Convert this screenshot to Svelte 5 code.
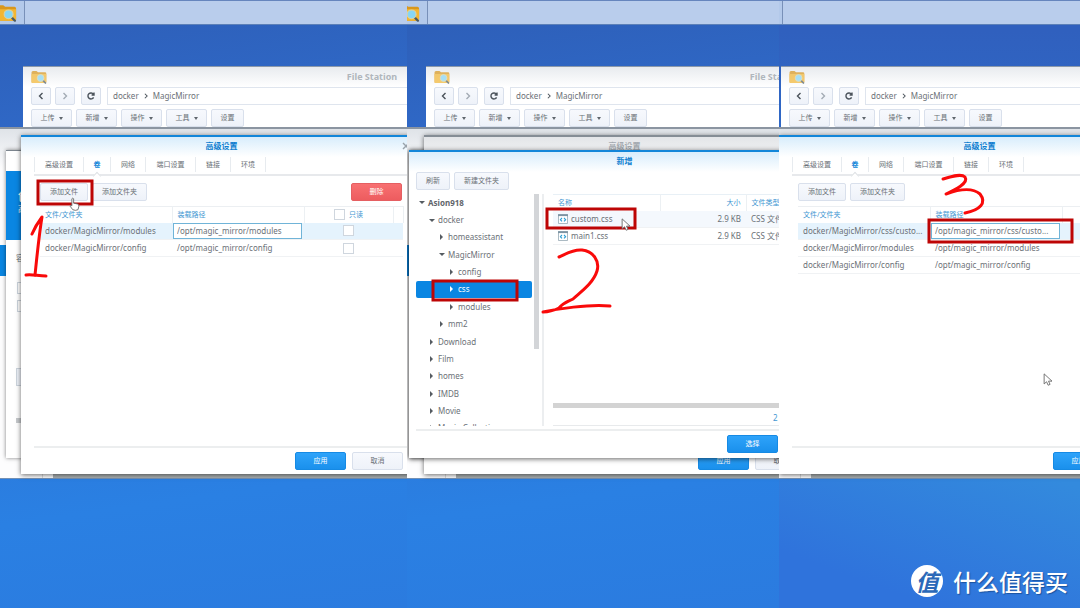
<script lang="ts">
	type Mount = { file: string; path: string; editing?: boolean };
	type Pane = { step: number; shift: number; picking: boolean; mounts: Mount[] };

	const panes: Pane[] = [
		{
			step: 1,
			shift: 0,
			picking: false,
			mounts: [
				{ file: 'docker/MagicMirror/modules', path: '/opt/magic_mirror/modules', editing: true },
				{ file: 'docker/MagicMirror/config', path: '/opt/magic_mirror/config' }
			]
		},
		{ step: 2, shift: -4, picking: true, mounts: [] },
		{
			step: 3,
			shift: -21,
			picking: false,
			mounts: [
				{
					file: 'docker/MagicMirror/css/custo...',
					path: '/opt/magic_mirror/css/custo...',
					editing: true
				},
				{ file: 'docker/MagicMirror/modules', path: '/opt/magic_mirror/modules' },
				{ file: 'docker/MagicMirror/config', path: '/opt/magic_mirror/config' }
			]
		}
	];

	const menus = ['上传', '新增', '操作', '工具'];
	const tabs = ['高级设置', '卷', '网络', '端口设置', '链接', '环境'];

	const tree = [
		{ name: 'Asion918', level: 0, open: true },
		{ name: 'docker', level: 1, open: true },
		{ name: 'homeassistant', level: 2, open: false },
		{ name: 'MagicMirror', level: 2, open: true },
		{ name: 'config', level: 3, open: false },
		{ name: 'css', level: 3, open: false },
		{ name: 'modules', level: 3, open: false },
		{ name: 'mm2', level: 2, open: false },
		{ name: 'Download', level: 1, open: false },
		{ name: 'Film', level: 1, open: false },
		{ name: 'homes', level: 1, open: false },
		{ name: 'IMDB', level: 1, open: false },
		{ name: 'Movie', level: 1, open: false },
		{ name: 'Movie Collection', level: 1, open: false }
	];

	const files = ['custom.css', 'main1.css'];
	let selected = $state('css');
</script>

{#snippet folder(cls: string)}
	<svg class={cls} viewBox="0 0 16 14" preserveAspectRatio="none" aria-hidden="true">
		<path d="M0.5 2.5 Q0.5 1 2 1 H5.5 L7 2.2 H14 Q15.3 2.2 15.3 3.5 V12 Q15.3 13 14.3 13 H1.5 Q0.5 13 0.5 12 Z" fill="#d9971c" />
		<path d="M0.5 4 H15.3 V12 Q15.3 13 14.3 13 H1.5 Q0.5 13 0.5 12 Z" fill="#f3b632" />
		<path d="M11.9 10.4 L14.4 13" stroke="#4b5b63" stroke-width="1.7" stroke-linecap="round" />
		<circle cx="9.6" cy="8" r="3.4" fill="#86d6f5" stroke="#d9d3a8" stroke-width="0.8" />
	</svg>
{/snippet}

{#snippet arrow(cls: string)}
	<svg class="cursor {cls}" viewBox="0 0 12 16" aria-hidden="true">
		<path d="M1 1 V12.5 L3.8 10 L5.6 14 L7.8 13 L6 9.3 H10 Z" fill="#fff" stroke="#666" />
	</svg>
{/snippet}

{#snippet fileStation()}
	<section class="window station">
		<header>
			{@render folder('folder')}
			<h2>File Station</h2>
		</header>
		<div class="nav">
			<button class="btn" type="button" aria-label="后退">
				<svg viewBox="0 0 8 8"><path d="M5.5 1 L2.5 4 L5.5 7" /></svg>
			</button>
			<button class="btn dim" type="button" aria-label="前进">
				<svg viewBox="0 0 8 8"><path d="M2.5 1 L5.5 4 L2.5 7" /></svg>
			</button>
			<button class="btn reload" type="button" aria-label="刷新">
				<svg viewBox="0 0 8 8"><path d="M6.6 5.4 A3 3 0 1 1 6.4 2.2 M7 0.6 V3 H4.6" /></svg>
			</button>
			<div class="crumbs">
				<span>docker</span>
				<svg viewBox="0 0 8 8"><path d="M2.5 1 L5.5 4 L2.5 7" /></svg>
				<span>MagicMirror</span>
			</div>
		</div>
		<div class="menus">
			{#each menus as m (m)}
				<button class="btn menu" type="button">{m}<i class="caret"></i></button>
			{/each}
			<button class="btn menu short" type="button">设置</button>
		</div>
	</section>
{/snippet}

{#snippet settings(pane: Pane)}
	<section class="window dialog settings" class:inactive={pane.picking}>
		<header>
			<h2>高级设置</h2>
			<button class="close" type="button" aria-label="关闭">
				<svg viewBox="0 0 8 8"><path d="M1 1 L7 7 M7 1 L1 7" /></svg>
			</button>
		</header>
		<nav>
			{#each tabs as tab (tab)}
				<button class="tab" class:wide={tab.length > 2} class:active={tab === '卷'} type="button">{tab}</button>
			{/each}
		</nav>
		<div class="tools">
			<button class="btn" type="button">添加文件</button>
			<button class="btn" type="button">添加文件夹</button>
			<button class="btn danger" type="button">删除</button>
		</div>
		<table class="mounts">
			<thead>
				<tr>
					<th>文件/文件夹</th>
					<th>装载路径</th>
					<th class="ro">
						<label><input type="checkbox" />只读</label>
					</th>
					<th class="end"></th>
				</tr>
			</thead>
			<tbody>
				{#each pane.mounts as mount (mount.file)}
					<tr class:current={mount.editing}>
						<td>{mount.file}</td>
						{#if mount.editing}
							<td class="edit"><input type="text" aria-label="装载路径" value={mount.path} /></td>
						{:else}
							<td>{mount.path}</td>
						{/if}
						<td class="ro"><input type="checkbox" aria-label="只读" /></td>
						<td></td>
					</tr>
				{/each}
			</tbody>
		</table>
		<footer>
			<button class="btn primary" type="button">应用</button>
			<button class="btn" type="button">取消</button>
		</footer>
	</section>
{/snippet}

{#snippet picker()}
	<section class="window dialog picker">
		<header><h2>新增</h2></header>
		<div class="tools">
			<button class="btn" type="button">刷新</button>
			<button class="btn" type="button">新建文件夹</button>
		</div>
		<div class="browse">
			<div class="side">
				<ul>
					{#each tree as node (node.name)}
						<li>
							<button
								class="node l{node.level}"
								class:open={node.open}
								class:selected={selected === node.name}
								onclick={() => (selected = node.name)}
								type="button"><i></i>{node.name}</button
							>
						</li>
					{/each}
				</ul>
				<div class="bar"></div>
			</div>
			<div class="list">
				<table>
					<thead>
						<tr><th class="name">名称</th><th class="size">大小</th><th>文件类型</th></tr>
					</thead>
					<tbody>
						{#each files as f, i (f)}
							<tr class:hover={i === 0}>
								<td>
									<svg class="code" viewBox="0 0 11 11" aria-hidden="true">
										<path d="M0.5 0.5 H10.5 V10.5 H0.5 Z" fill="#fff" stroke="#9fb0bb" />
										<path d="M0 1.3 H11" stroke="#7d94a3" stroke-width="2" />
										<path d="M4.4 4.4 L2.6 6.3 L4.4 8.2 M6.6 4.4 L8.4 6.3 L6.6 8.2" fill="none" stroke="#2e9fd4" stroke-width="1.2" />
									</svg>{f}
								</td>
								<td class="size">2.9 KB</td>
								<td>CSS 文件</td>
							</tr>
						{/each}
					</tbody>
				</table>
				<div class="hbar"></div>
				<p class="count">2</p>
			</div>
		</div>
		<footer><button class="btn primary" type="button">选择</button></footer>
	</section>
{/snippet}

<main>
	{#each panes as pane (pane.step)}
		<div class="pane step{pane.step}">
			<div class="desktop" style:left="{pane.shift}px">
				<div class="taskbar">
					<button class="app" type="button" aria-label="File Station">{@render folder('task')}</button>
				</div>
				{@render fileStation()}
				<section class="window docker">
					<div class="status"></div>
				</section>
				<div class="strip"></div>
				<section class="window wizard">
					<div class="banner"><b>创建</b><span>高级</span></div>
					<p>容器</p>
					<i class="field"></i><i class="field"></i><i class="next"></i><i class="scroll"></i>
				</section>
				{@render settings(pane)}
				{#if pane.picking}
					{@render picker()}
				{/if}

				<svg class="marks" aria-hidden="true">
					{#if pane.step === 1}
						<rect x="38" y="181" width="54" height="23" />
						<path d="M32 234 C35 227 39 221 42 217 C39 235 37 256 35 275" />
						<path d="M26 275 C32 274 38 276 46 276" />
					{:else if pane.step === 2}
						<rect x="30" y="281" width="84" height="19" />
						<rect x="144" y="209" width="88" height="19" />
						<path d="M156 257 C163 254 170 249 179 250 C190 251 197 261 194 271 C190 284 176 293 170 299 C164 302 160 303 156 308 C150 311 145 312 140 312 C154 309 185 304 207 306" />
					{:else}
						<rect x="171" y="220" width="143" height="22" />
						<path d="M185 179 C192 177 203 173 207 177 C211 183 197 190 188 194 C199 190 214 187 222 194 C229 203 222 210 207 213" />
					{/if}
				</svg>
				{#if pane.step === 1}
					<svg class="cursor hand" viewBox="0 0 12 16" aria-hidden="true">
						<path d="M3 10 V2 Q4 0.6 5 2 V7 L9.5 8 Q11.3 8.5 11 10.5 L10 14.5 Q7 16 4 14.5 L1 10.5 Q0.8 9 3 10 Z" fill="#fff" stroke="#666" />
					</svg>
				{:else}
					{@render arrow(pane.step === 2 ? 'on-file' : 'idle')}
				{/if}
			</div>
		</div>
	{/each}
	<div class="brand"><b>值</b><span>什么值得买</span></div>
</main>

<style>
	:global(body) {
		background: #2c7de0;
	}

	main {
		color: #6b7177;
		display: grid;
		font: 8px/12px 'Noto Sans', 'Noto Sans CJK SC', sans-serif;
		grid-template-columns: 407fr 372fr 301fr;
		min-height: 100vh;
		position: relative;
	}

	.pane {
		background: linear-gradient(172deg, #2e60ba 5%, #2f68c6 20%, #2a80e3 79%, #2b7bdf);
		overflow: hidden;
		position: relative;
	}

	.step3 {
		background: linear-gradient(#3060be 5%, #2f68c6 21%, transparent 40%),
			linear-gradient(20deg, #2f73dc 8%, #338add 32%);
	}

	.desktop {
		height: 100%;
		position: absolute;
		top: 0;
		width: 758px;
	}

	h2,
	p,
	ul {
		margin: 0;
		padding: 0;
	}

	button,
	input,
	header,
	th,
	td {
		box-sizing: border-box;
	}

	button,
	input {
		color: inherit;
		font: inherit;
		margin: 0;
	}

	.taskbar {
		background: #b9cdec;
		border-bottom: 1px solid #5c80b8;
		border-top: 1px solid #6685bd;
		height: 23px;
	}

	.app {
		background: #b3c9ea;
		border: 0;
		border-right: 1px solid #7890b8;
		display: block;
		height: 23px;
		padding: 0;
		width: 25px;
	}

	.task {
		display: block;
		height: 18px;
		margin-left: -4px;
		width: 21px;
	}

	.window {
		background: #fff;
		box-sizing: border-box;
		position: absolute;
	}

	.window h2 {
		font-size: 8px;
		font-weight: 700;
		text-align: center;
	}

	.btn {
		align-items: center;
		background: linear-gradient(#f7f9fd, #eef2f9);
		border: 1px solid #d9e0ec;
		border-radius: 2px;
		display: flex;
		font-size: 7px;
		height: 18px;
		justify-content: center;
		line-height: 10px;
		padding: 0;
		white-space: nowrap;
	}

	.btn svg,
	.crumbs svg,
	.close svg {
		fill: none;
		height: 8px;
		stroke: #4b535b;
		stroke-width: 1.4;
		width: 8px;
	}

	.primary {
		background: linear-gradient(#2ea3fa, #1a90ec);
		border-color: #168ae4;
		color: #fff;
	}

	.danger {
		background: linear-gradient(#f87071, #ed5c5f);
		border-color: #e55f62;
		color: #fff;
	}

	/* File Station */
	.station {
		border-top: 1px solid #8b99ab;
		height: 80px;
		left: 23px;
		top: 66px;
		width: 698px;
	}

	.station header {
		align-items: center;
		background: linear-gradient(#e8ebef, #fff);
		display: flex;
		height: 20px;
		padding-left: 8px;
	}

	.station h2 {
		color: #b0b6bc;
		flex: 1;
		font-size: 9px;
		padding-right: 24px;
	}

	.folder {
		height: 14px;
		opacity: 0.7;
		width: 16px;
	}

	.nav {
		display: flex;
		gap: 4px;
		padding-left: 8px;
	}

	.nav .btn {
		width: 20px;
	}

	.nav .reload {
		margin-left: 2px;
	}

	.nav .dim svg {
		stroke: #a3abb4;
	}

	.crumbs {
		align-items: center;
		border: 1px solid #dfe5ee;
		display: flex;
		flex: 1;
		gap: 4px;
		height: 16px;
		margin-left: 2px;
		padding-left: 5px;
	}

	.crumbs svg {
		height: 6px;
		width: 6px;
	}

	.menus {
		display: flex;
		gap: 4px;
		padding: 4px 8px;
	}

	.menu {
		gap: 4px;
		width: 41px;
	}

	.short {
		width: 33px;
	}

	.caret {
		border: 2px solid transparent;
		border-bottom: 0;
		border-top: 3px solid #5f666d;
	}

	/* Docker windows behind the dialog */
	.docker {
		background: linear-gradient(#dfe3e8, #fdfdfe 40px);
		border-bottom: 1px solid #7390b4;
		border-top: 2px solid #8b95a1;
		display: flex;
		flex-direction: column;
		height: 352px;
		justify-content: flex-end;
		left: -20px;
		top: 127px;
		width: 800px;
	}

	.status {
		background: #abb1b3;
		box-shadow: -10px 0 #fff, -11px 0 #ddd;
		height: 7px;
		margin-left: 73px;
	}

	.strip {
		background: #0a86e2;
		height: 31px;
		left: 0;
		position: absolute;
		top: 245px;
		width: 8px;
	}

	.wizard {
		border-top: 1px solid #7c858e;
		box-shadow: 0 0 4px rgb(0 0 0 / 50%);
		height: 308px;
		left: 6px;
		padding-top: 20px;
		top: 150px;
		width: 431px;
	}

	.banner {
		background: #0a86e2;
		box-sizing: border-box;
		color: #fff;
		display: flex;
		flex-direction: column;
		font-size: 8px;
		height: 69px;
		padding: 20px 12px;
	}

	.banner b {
		font-size: 12px;
	}

	.wizard p {
		margin: 12px 10px;
	}

	.field,
	.next,
	.scroll {
		border: 1px solid #ccd4dd;
		display: block;
		height: 10px;
		margin: 6px 11px;
		width: 60px;
	}

	.wizard p + .field {
		margin-top: 18px;
	}

	.next {
		background: #edf1f8;
		height: 16px;
		margin: 56px 10px 32px;
	}

	.scroll {
		background: #c6c9cc;
		border: 0;
		height: 5px;
		margin: 0 10px;
	}

	/* Dialogs */
	.dialog {
		border-top: 2px solid #1286d9;
		box-shadow: 0 1px 5px rgb(0 0 0 / 60%);
		display: flex;
		flex-direction: column;
	}

	.dialog header {
		background: linear-gradient(#d8edfc, #fff);
		color: #0f7fd0;
		height: 20px;
		padding-top: 3px;
		position: relative;
	}

	.dialog footer {
		border-top: 2px solid #eceeef;
		display: flex;
		margin-top: auto;
	}

	.settings {
		height: 339px;
		left: 21px;
		top: 135px;
		width: 401px;
	}

	.inactive {
		border-color: #858d95;
	}

	.inactive header {
		background: linear-gradient(#e3e5e8, #f4f5f6);
		color: #a5abb1;
	}

	.close {
		background: none;
		border: 0;
		display: flex;
		padding: 0;
		position: absolute;
		right: 12px;
		top: 5px;
	}

	.close svg {
		stroke: #99a2aa;
	}

	nav {
		border-bottom: 2px solid #e7e9ec;
		display: flex;
		height: 17px;
		margin: 0 0 6px 13px;
	}

	.tab {
		background: none;
		border: 0;
		border-right: 1px solid #e7ebef;
		font-size: 7px;
		height: 15px;
		line-height: 10px;
		padding: 0;
		position: relative;
		width: 35px;
	}

	.tab:first-child {
		border-left: 1px solid #e7ebef;
	}

	.tab.wide {
		width: 50px;
	}

	.tab.active {
		color: #1286d9;
		font-weight: 700;
		width: 27px;
	}

	.tab.active::after {
		background: #fff;
		border: 1px solid #dfe2e5;
		border-bottom: 0;
		border-right: 0;
		content: '';
		height: 5px;
		left: 10px;
		position: absolute;
		top: 16px;
		transform: rotate(45deg);
		width: 5px;
	}

	.tools {
		display: flex;
		gap: 4px;
	}

	.settings .tools {
		padding: 1px 20px 5px 19px;
	}

	.tools .btn {
		padding: 0 9px;
	}

	.tools .danger {
		justify-content: center;
		margin-left: auto;
		width: 51px;
	}

	table {
		border-collapse: collapse;
		table-layout: fixed;
	}

	th,
	td {
		height: 17px;
		overflow: hidden;
		padding: 0 0 0 5px;
		text-align: left;
		white-space: nowrap;
	}

	th {
		border-right: 1px solid #ecf0f3;
		color: #3f97d2;
		font-size: 7px;
		font-weight: 400;
		height: 16px;
		line-height: 10px;
	}

	tbody tr {
		border-bottom: 1px solid #f0f2f4;
	}

	.mounts {
		border-top: 1px solid #eceff2;
		margin-left: 19px;
		width: 363px;
	}

	.mounts th {
		width: 132px;
	}

	.mounts .ro {
		padding: 0;
		text-align: center;
		width: 89px;
	}

	.mounts .end {
		padding: 0;
		width: 10px;
	}

	.ro label {
		align-items: center;
		display: flex;
		gap: 4px;
		justify-content: center;
	}

	input[type='checkbox'] {
		appearance: none;
		background: #fff;
		border: 1px solid #cfd6de;
		display: block;
		height: 11px;
		margin: 0 auto;
		width: 11px;
	}

	.ro label input {
		margin: 0;
	}

	.current {
		background: #e5f3fd;
	}

	.mounts .edit {
		padding: 0 2px 0 1px;
	}

	.edit input {
		background: #fff;
		border: 1px solid #70b4d8;
		display: block;
		height: 16px;
		padding: 0 3px;
		width: 129px;
	}

	.settings footer {
		gap: 6px;
		justify-content: flex-end;
		margin-left: 13px;
		padding: 4px 19px 4px 0;
	}

	footer .btn {
		width: 51px;
	}

	/* File picker */
	.picker {
		height: 308px;
		left: 6px;
		top: 150px;
		width: 431px;
	}

	.picker .tools {
		padding: 0 7px 4px;
	}

	.picker header {
		height: 22px;
	}

	.browse {
		display: flex;
		height: 232px;
	}

	.side {
		border-right: 2px solid #eceef0;
		display: flex;
		gap: 2px;
		overflow: hidden;
		padding: 0 3px 0 7px;
	}

	.side ul {
		display: grid;
		grid-auto-rows: 1fr;
		height: 243px;
		list-style: none;
		width: 116px;
	}

	.side .bar {
		background: #d3d5d8;
		height: 155px;
		width: 5px;
	}

	li {
		display: flex;
	}

	.node {
		align-items: center;
		background: none;
		border: 0;
		border-radius: 2px;
		display: flex;
		flex: 1;
		gap: 4px;
		padding: 0 0 0 3px;
		white-space: nowrap;
	}

	.l0 {
		color: #5f656b;
		font-weight: 700;
	}

	.l1 {
		padding-left: 13px;
	}

	.l2 {
		padding-left: 23px;
	}

	.l3 {
		padding-left: 33px;
	}

	.node i {
		border: 3px solid transparent;
		border-left-color: #555b61;
		border-right: 0;
		margin: 0 1px;
	}

	.node.open i {
		border: 3px solid transparent;
		border-bottom: 0;
		border-top-color: #555b61;
		margin: 0 -1px 0 0;
	}

	.node.selected {
		background: #0a86e2;
		color: #fff;
	}

	.node.selected i {
		border-left-color: #fff;
	}

	.list {
		display: flex;
		flex: 1;
		flex-direction: column;
		padding-left: 9px;
	}

	.list table {
		border-top: 1px solid #e8f0f6;
		width: 100%;
	}

	.list .name {
		width: 107px;
	}

	.list .size {
		padding: 0 5px 0 0;
		text-align: right;
		width: 86px;
	}

	.hover {
		background: #f4f8fd;
	}

	.code {
		height: 10px;
		margin-right: 3px;
		vertical-align: -2px;
		width: 10px;
	}

	.hbar {
		background: #d3d3d3;
		height: 5px;
		margin-top: auto;
	}

	.count {
		border-bottom: 1px solid #e8eaec;
		color: #3f97d2;
		height: 12px;
		padding: 4px 0 1px 220px;
	}

	.picker footer {
		margin: 3px 0 5px 7px;
		padding: 4px 0 0 311px;
	}

	/* Hand-drawn marks and pointers */
	.marks {
		fill: none;
		height: 100%;
		left: 0;
		pointer-events: none;
		position: absolute;
		stroke: #f90a0a;
		stroke-linecap: round;
		stroke-linejoin: round;
		stroke-width: 3;
		top: 0;
		width: 100%;
	}

	.marks rect {
		stroke: #bd0505;
		stroke-linejoin: miter;
	}

	.cursor {
		height: 14px;
		pointer-events: none;
		position: absolute;
		width: 11px;
	}

	.hand {
		left: 69px;
		top: 197px;
	}

	.on-file {
		left: 218px;
		top: 218px;
	}

	.idle {
		left: 285px;
		top: 373px;
	}

	.brand {
		align-items: center;
		bottom: 11px;
		color: #fff;
		display: flex;
		font: 500 23px/32px 'Noto Sans CJK SC', sans-serif;
		gap: 10px;
		position: absolute;
		right: 12px;
		text-shadow: 1px 1px 1px #1c539f;
	}

	.brand b {
		background: #fff;
		border-radius: 50%;
		color: #2b69b8;
		font-style: italic;
		height: 32px;
		text-align: center;
		text-shadow: none;
		width: 32px;
	}
</style>
